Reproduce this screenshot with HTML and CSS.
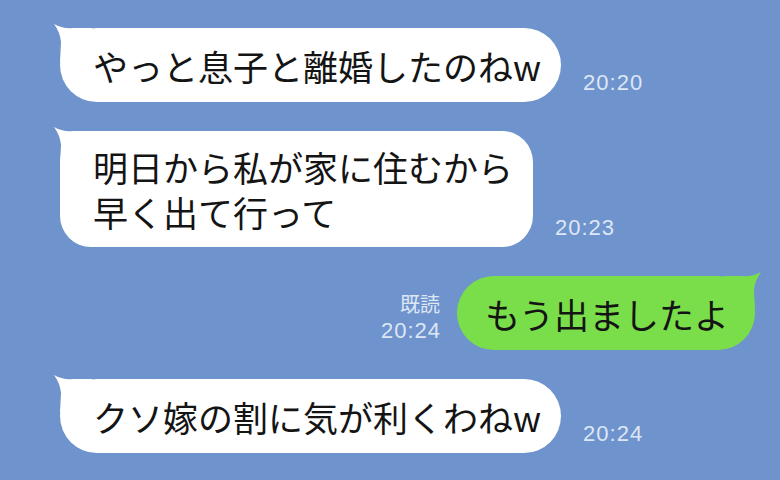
FILE: index.html
```html
<!DOCTYPE html>
<html lang="ja">
<head>
    <meta charset="UTF-8">
    <meta name="viewport" content="width=device-width, initial-scale=1.0">
    <title>トーク</title>
    <link rel="stylesheet" href="styles.css">
</head>
<body>
    <div class="chat">
        <div class="row left">
            <div class="bubble">
                <svg class="tail" viewBox="0 0 40 40"><path d="M2 2 Q10 7 22 6 L40 6 L40 40 L8 40 L9 20 Q8 10 2 2 Z"/></svg>
                <span class="text">やっと息子と離婚したのねw</span>
            </div>
            <div class="meta"><span class="time">20:20</span></div>
        </div>

        <div class="row left">
            <div class="bubble multi">
                <svg class="tail" viewBox="0 0 40 40"><path d="M2 2 Q10 7 22 6 L40 6 L40 40 L8 40 L9 20 Q8 10 2 2 Z"/></svg>
                <span class="line">明日から私が家に住むから</span>
                <span class="line">早く出て行って</span>
            </div>
            <div class="meta"><span class="time">20:23</span></div>
        </div>

        <div class="row right">
            <div class="meta">
                <span class="read">既読</span>
                <span class="time">20:24</span>
            </div>
            <div class="bubble green">
                <svg class="tail" viewBox="0 0 40 40"><path d="M2 2 Q10 7 22 6 L40 6 L40 40 L8 40 L9 20 Q8 10 2 2 Z"/></svg>
                <span class="text">もう出ましたよ</span>
            </div>
        </div>

        <div class="row left">
            <div class="bubble">
                <svg class="tail" viewBox="0 0 40 40"><path d="M2 2 Q10 7 22 6 L40 6 L40 40 L8 40 L9 20 Q8 10 2 2 Z"/></svg>
                <span class="text">クソ嫁の割に気が利くわねw</span>
            </div>
            <div class="meta"><span class="time">20:24</span></div>
        </div>
    </div>
</body>
</html>
```

FILE: styles.css
```css
body {
    margin: 0;
    padding: 0;
    background-color: #6f93cc;
    font-family: "Noto Sans CJK JP", "Noto Sans", sans-serif;
    width: 780px;
    height: 480px;
    overflow: hidden;
}
.chat {
    display: flex;
    flex-direction: column;
    gap: 29px;
    padding-top: 28px;
}
.row {
    display: flex;
    align-items: flex-end;
}
.row.left {
    padding-left: 60px;
    gap: 22px;
}
.row.right {
    justify-content: flex-end;
    padding-right: 25px;
    gap: 17px;
}
.bubble {
    position: relative;
    background-color: #fff;
    color: #141414;
    font-size: 35px;
    line-height: 45px;
    padding: 14.5px 20px 14.5px 33px;
    border-radius: 37px;
}
.bubble.multi {
    display: flex;
    flex-direction: column;
    padding: 13px 20px 13px 33px;
    border-radius: 31px;
}
.bubble.green {
    background-color: #7ade4a;
    padding: 14.5px 26px 14.5px 28px;
}
.text,
.line {
    position: relative;
    white-space: nowrap;
}
.line {
    height: 45px;
}
/* little speech tail on the top corner */
.tail {
    position: absolute;
    left: -8px;
    top: -6px;
    width: 40px;
    height: 40px;
    fill: #fff;
}
.green .tail {
    left: auto;
    right: -8px;
    transform: scaleX(-1);
    fill: #7ade4a;
}
.meta {
    display: flex;
    flex-direction: column;
    align-items: flex-end;
    margin-bottom: 7px;
    color: #dde7f6;
}
.time {
    font-family: "Liberation Sans", Arial, sans-serif;
    font-size: 22px;
    line-height: 25px;
    letter-spacing: 1px;
    margin-right: -1px;
}
.read {
    font-size: 20px;
    line-height: 29px;
}
```
